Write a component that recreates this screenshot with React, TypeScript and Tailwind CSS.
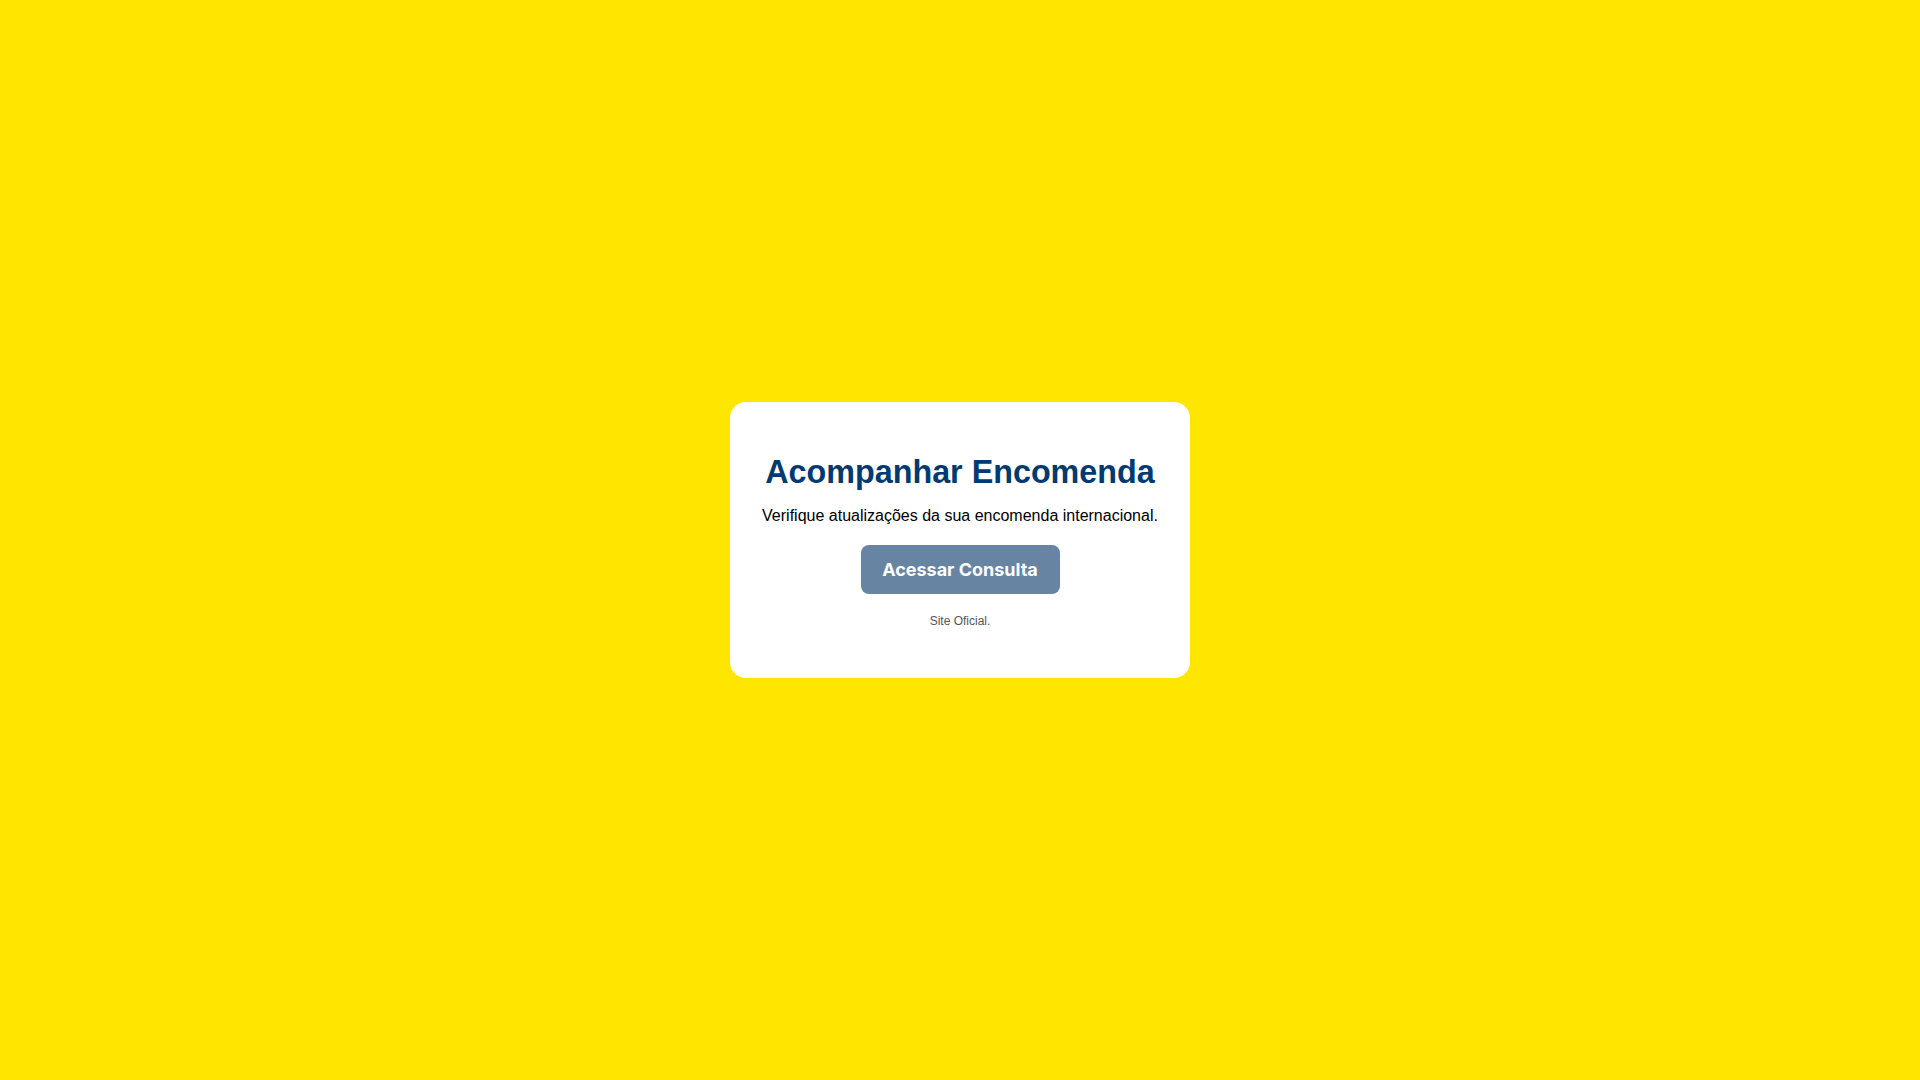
export default function App() {
  return (
    <div className="min-h-screen w-full flex items-center justify-center bg-[#ffe600] font-['Liberation_Sans',Arial,sans-serif]">
      <div className="w-[460px] bg-white rounded-[16px] flex flex-col items-center text-center pt-[52px] pb-[50px]">
        <h1 className="text-[32.3px] leading-[37px] font-bold text-[#003a70]">Acompanhar Encomenda</h1>
        <p className="mt-[16px] text-[16px] leading-[18px] text-black">
          Verifique atualizações da sua encomenda internacional.
        </p>
        <button className="mt-[20px] h-[49px] w-[199px] rounded-[8px] border-0 outline-none shadow-none bg-[#6785a3] text-white text-[18px] font-bold font-['Inter',sans-serif]">
          Acessar Consulta
        </button>
        <p className="mt-[20px] text-[12px] leading-[14px] text-[#555555]">Site Oficial.</p>
      </div>
    </div>
  );
}
